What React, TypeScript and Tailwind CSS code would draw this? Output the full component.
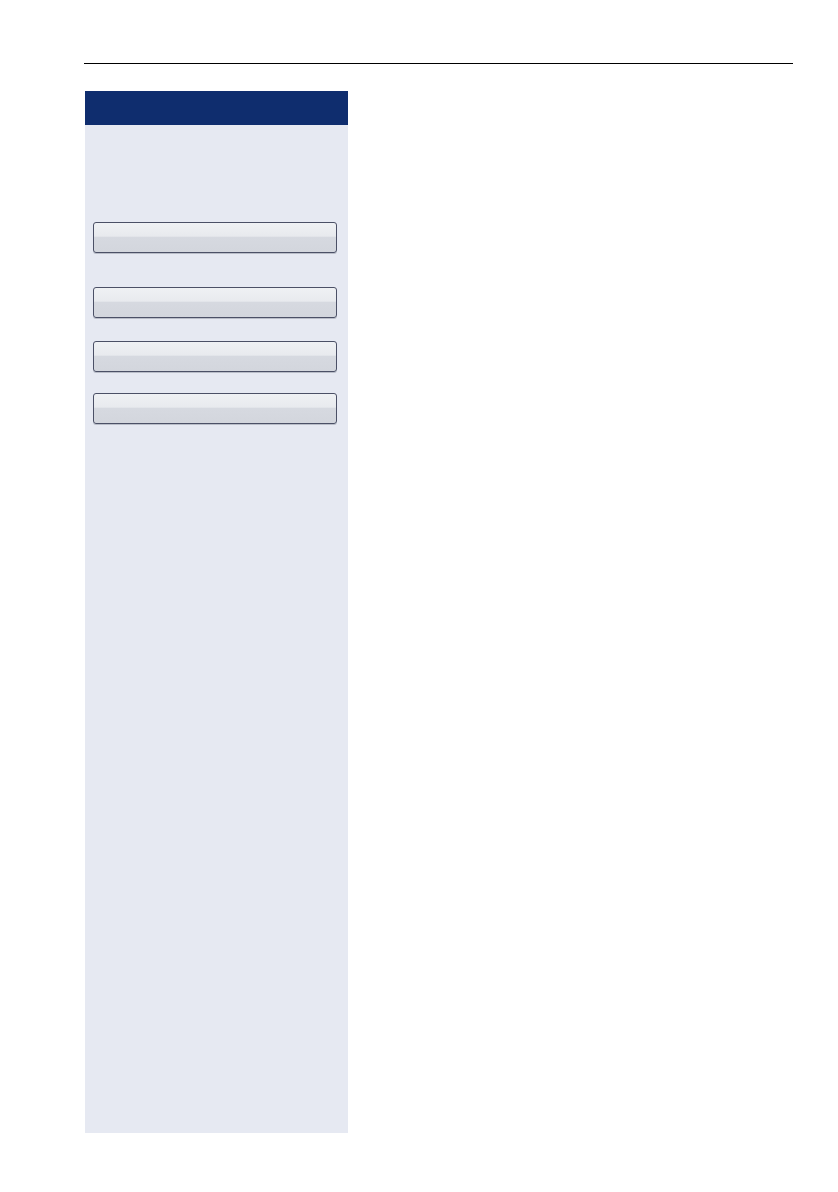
import React from "react";

function SoftKey({ className = "" }: { className?: string }) {
  return (
    <div
      className={`h-[31px] w-[244px] rounded-[3px] border border-[#4b5066] bg-[linear-gradient(to_bottom,#eff1f4_0%,#e8eaee_45%,#d6d9e0_50%,#d3d6dd_100%)] shadow-[0_1px_0_#b9bdc8] ${className}`}
    />
  );
}

export default function App() {
  return (
    <div className="relative min-h-[1192px] w-[838px] bg-white font-['Liberation_Sans',sans-serif]">
      <div className="pt-[63px] pl-[84px]">
        <div className="h-px w-[709px] bg-black" />
      </div>
      <div className="ml-[85px] mt-[27px] flex h-[1042px] w-[263px] flex-col bg-[#e6e9f2]">
        <div className="h-[34px] bg-[#0f2d6e]" />
        <div className="flex flex-col pl-[8px]">
          <SoftKey className="mt-[97px]" />
          <SoftKey className="mt-[34px]" />
          <SoftKey className="mt-[23px]" />
          <SoftKey className="mt-[21px]" />
        </div>
      </div>
    </div>
  );
}
